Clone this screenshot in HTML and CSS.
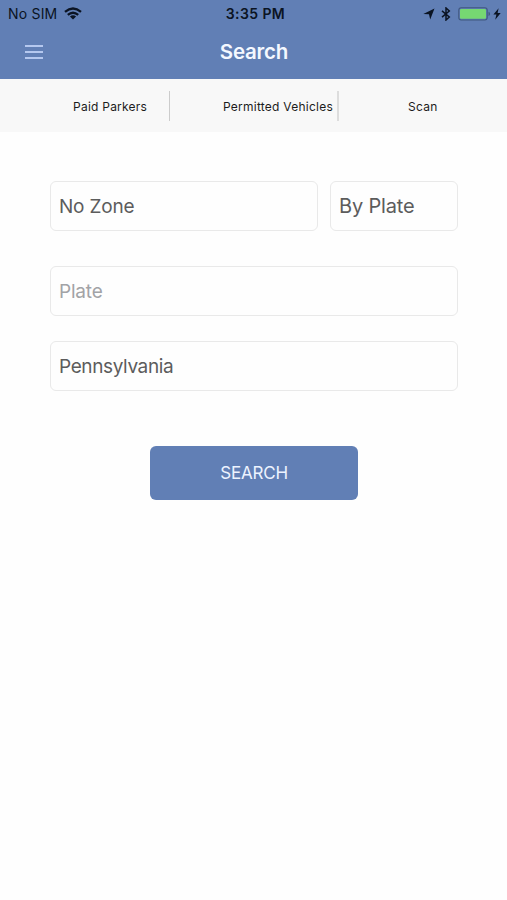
FILE: index.html
```
<!DOCTYPE html>
<html lang="en">
<head>
<meta charset="utf-8">
<title>Search</title>
<link rel="stylesheet" href="styles.css">
</head>
<body>
<header class="header">
  <div class="status">
    <div class="carrier"><span class="carrier-name">No SIM</span>
      <svg class="wifi" width="18" height="13" viewBox="0 0 18 13" fill="none" stroke="#0b1423" stroke-width="2.3"><path d="M1 4.9Q9-1.9 17 4.9M3.8 7.9Q9 3.5 14.2 7.9"/><path d="M5.9 9.5Q9 6.9 12.1 9.5L9 12.6Z" fill="#0b1423" stroke="none"/></svg>
    </div>
    <time class="clock">3:35 PM</time>
    <div class="indicators">
      <svg class="location" width="12" height="12" viewBox="0 0 12 12"><path d="M11.5.5 7.2 11.5 6 6.3.3 6Z" fill="#0b1423"/></svg>
      <svg class="bluetooth" width="10" height="14" viewBox="0 0 10 14" fill="none" stroke="#0b1423" stroke-width="1.5"><path d="M1 3.9 8.3 10 5 13V1L8.3 4 1 10.1"/></svg>
      <svg class="battery" width="33" height="14" viewBox="0 0 33 14"><rect x=".8" y=".8" width="28.4" height="12.2" rx="2.4" fill="none" stroke="#40587f" stroke-width="1.1"/><rect x="2" y="2" width="26" height="9.8" rx="1.2" fill="#76d872"/><path d="M30.5 4.8q1.6.5 1.6 2.1t-1.6 2.1Z" fill="#40587f"/></svg>
      <svg class="bolt" width="8" height="12" viewBox="0 0 8 12"><path d="M5.6.3.4 6.6h3L2.2 11.8 7.7 5.1H4.6Z" fill="#0b1423"/></svg>
    </div>
  </div>
  <div class="navbar">
    <button class="menu" aria-label="Menu"><span></span><span></span><span></span></button>
    <h1 class="title">Search</h1>
  </div>
</header>
<nav class="tabs">
  <a class="tab tab-paid"><span>Paid Parkers</span></a>
  <a class="tab tab-permitted"><span>Permitted Vehicles</span></a>
  <a class="tab tab-scan"><span>Scan</span></a>
</nav>
<main class="form">
  <div class="row">
    <div class="field zone"><span>No Zone</span></div>
    <div class="field mode"><span>By Plate</span></div>
  </div>
  <div class="field plate"><span>Plate</span></div>
  <div class="field state"><span>Pennsylvania</span></div>
  <button class="submit"><span>SEARCH</span></button>
</main>
</body>
</html>
```
FILE: styles.css
```
* { box-sizing: border-box; }
body {
  margin: 0;
  min-height: 900px;
  background: #fefefe;
  font-family: Inter, "Liberation Sans", sans-serif;
}
button { border: 0; padding: 0; font-family: inherit; }
.header { height: 79px; background: #617fb5; }
.status {
  display: grid;
  grid-template-columns: 1fr auto 1fr;
  align-items: center;
  height: 27px;
  padding: 0 6px 0 8px;
  color: #0b1423;
  font-size: 14px;
  line-height: 27px;
}
.carrier { display: flex; align-items: center; gap: 7px; }
.carrier-name { letter-spacing: .2px; }
.clock { padding-left: 2px; font-weight: 600; letter-spacing: .4px; }
.indicators { display: flex; align-items: center; justify-content: flex-end; }
.bluetooth { margin-left: 6px; }
.battery { margin-left: 7px; }
.bolt { margin-left: 2px; }
.navbar {
  display: grid;
  grid-template-columns: 1fr auto 1fr;
  align-items: center;
  height: 50px;
}
.menu {
  display: flex;
  flex-direction: column;
  gap: 4px;
  width: 18px;
  margin-left: 25px;
  background: none;
}
.menu span { height: 2px; background: #b5c8ef; }
.title {
  margin: 0;
  padding: 0 0 0 1px;
  color: #f4f8ff;
  font-size: 20.5px;
  font-weight: 600;
  letter-spacing: -.2px;
  line-height: 50px;
}
.tabs {
  display: grid;
  grid-template-columns: 170px 169px 168px;
  align-items: center;
  height: 53px;
  background: #f8f8f8;
}
.tab {
  height: 30px;
  color: #1c1c1c;
  font-size: 12px;
  font-weight: 400;
  letter-spacing: .24px;
  line-height: 31px;
  white-space: nowrap;
}
.tab-paid { padding-left: 73px; border-right: 1px solid #ccc; }
.tab-permitted { padding-left: 53px; border-right: 2px solid #ddd; }
.tab-scan { padding-left: 69px; }
.form { display: flex; flex-direction: column; padding: 49px 49px 0 50px; }
.row { display: grid; grid-template-columns: 268px 128px; gap: 12px; }
.field {
  height: 50px;
  padding-left: 8px;
  border: 1px solid #e9e9e9;
  border-radius: 6px;
  color: #5c5c5c;
  font-size: 19px;
  line-height: 50px;
}
.zone { letter-spacing: -.2px; }
.mode { font-size: 20px; letter-spacing: -.18px; line-height: 49px; }
.plate { margin-top: 35px; color: #a2a3a6; letter-spacing: -.2px; }
.state { margin-top: 25px; letter-spacing: -.38px; }
.submit {
  align-self: center;
  width: 208px;
  height: 54px;
  margin-top: 54.5px;
  border-radius: 6px;
  background: #617fb5;
  color: #edf3ff;
  font-size: 17px;
  letter-spacing: -.2px;
  line-height: 54px;
}
```
